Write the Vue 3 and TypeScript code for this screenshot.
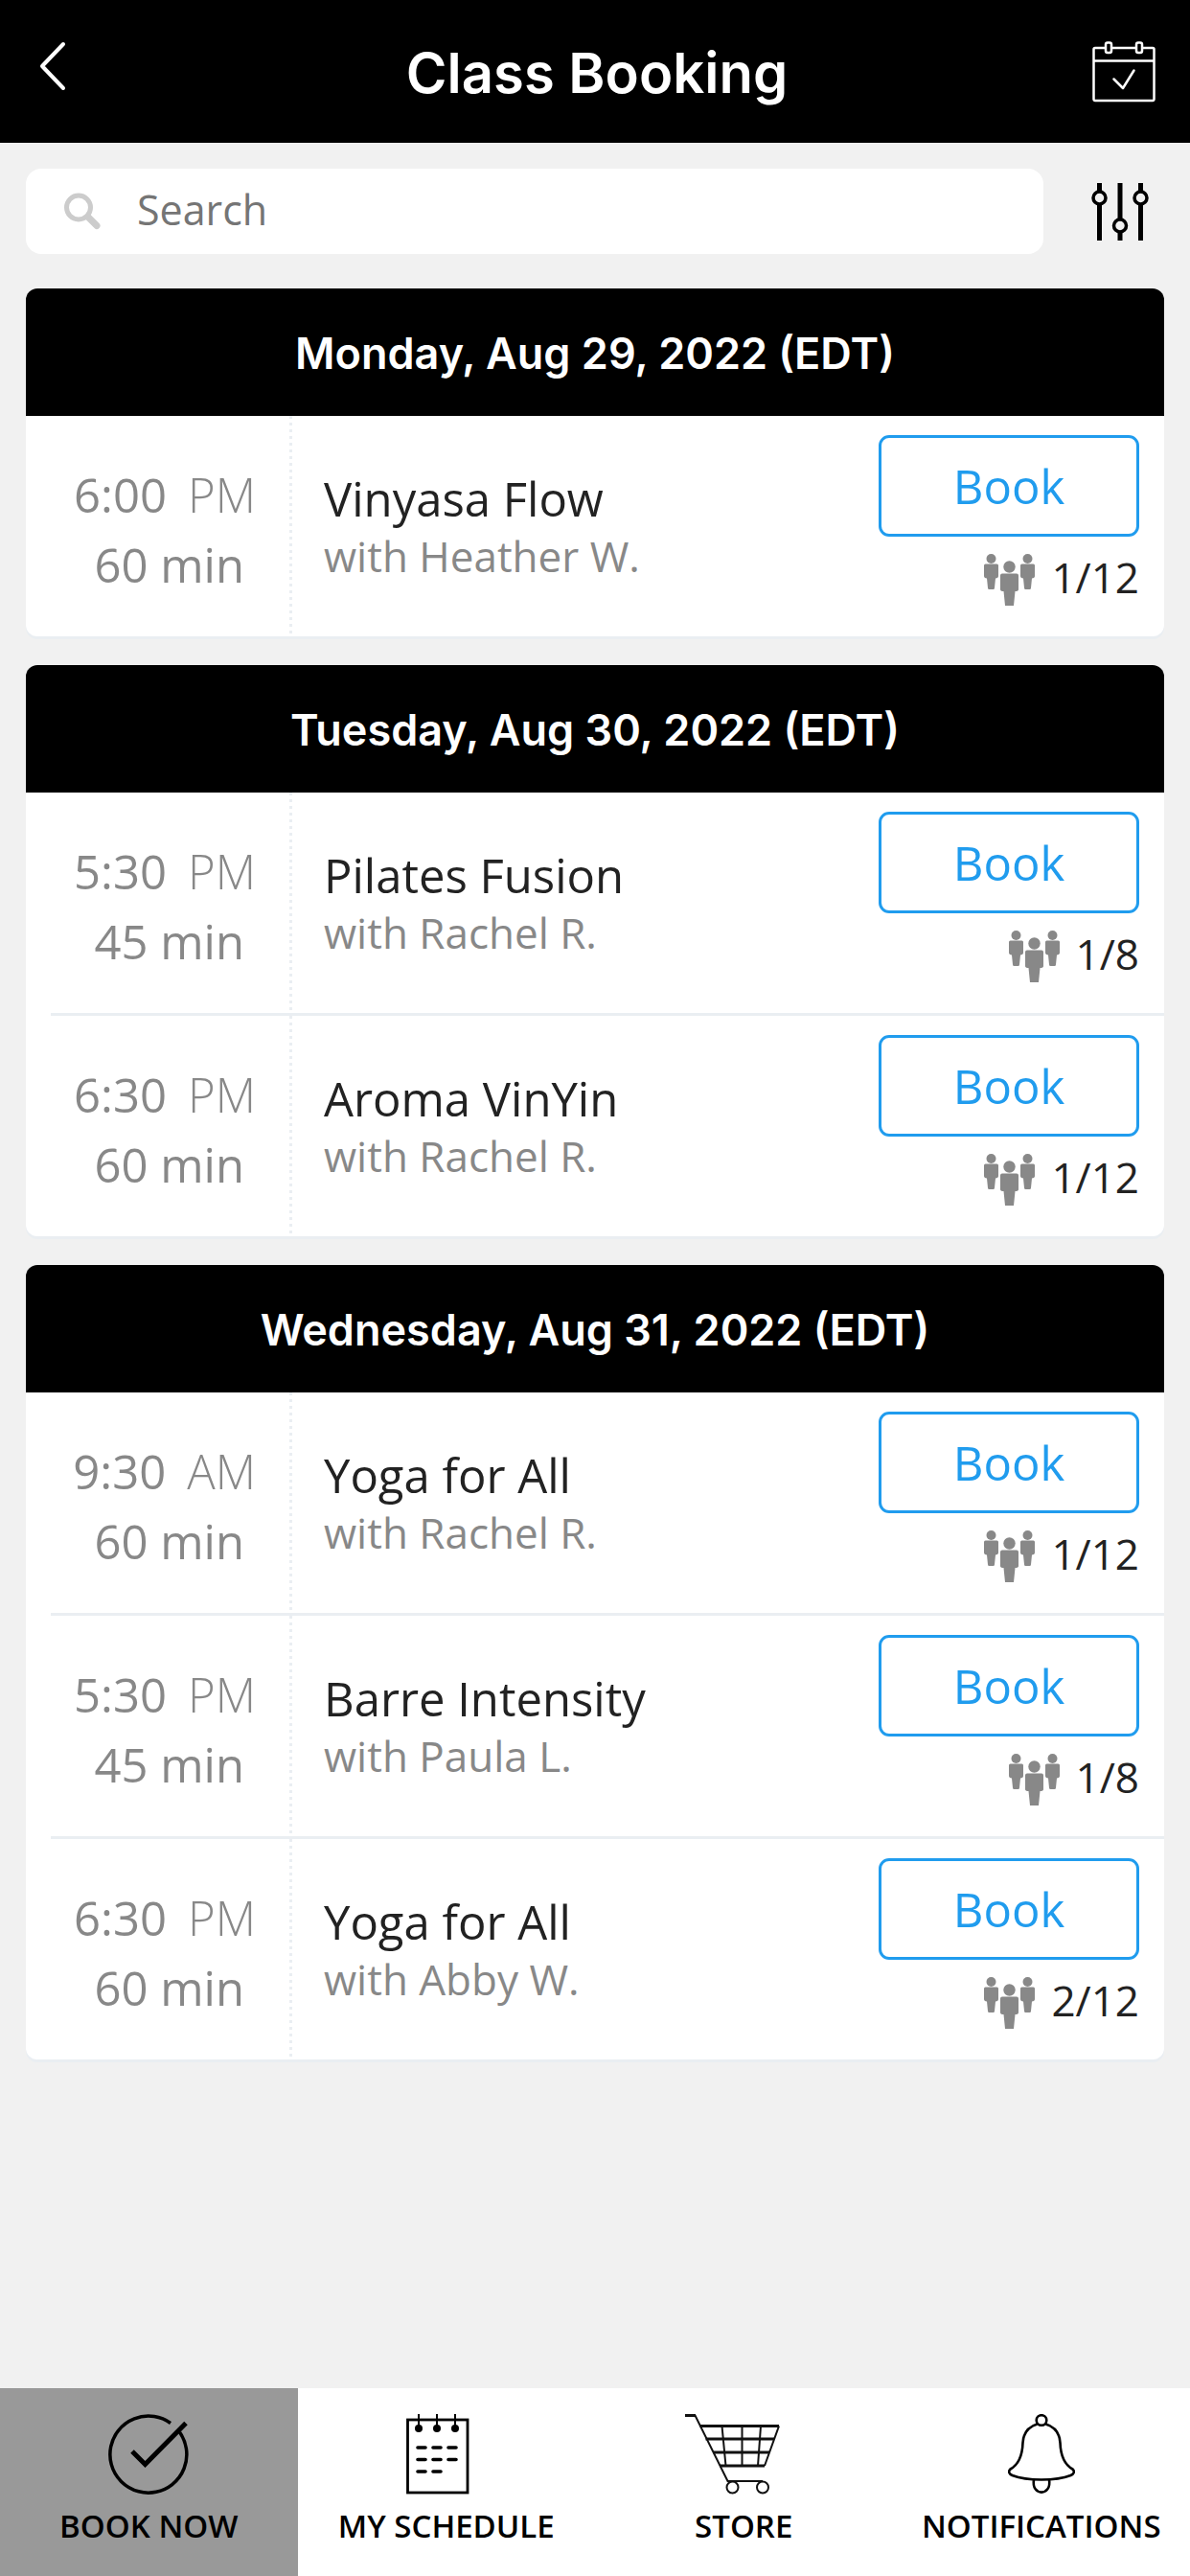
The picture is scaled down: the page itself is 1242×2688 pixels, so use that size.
<script setup lang="ts">
import { ref, computed } from 'vue'

interface ClassSlot {
  time: string
  period: 'AM' | 'PM'
  minutes: number
  title: string
  teacher: string
  booked: number
  capacity: number
}

interface Day {
  label: string
  slots: ClassSlot[]
}

const days: Day[] = [
  {
    label: 'Monday, Aug 29, 2022 (EDT)',
    slots: [
      { time: '6:00', period: 'PM', minutes: 60, title: 'Vinyasa Flow', teacher: 'Heather W.', booked: 1, capacity: 12 },
    ],
  },
  {
    label: 'Tuesday, Aug 30, 2022 (EDT)',
    slots: [
      { time: '5:30', period: 'PM', minutes: 45, title: 'Pilates Fusion', teacher: 'Rachel R.', booked: 1, capacity: 8 },
      { time: '6:30', period: 'PM', minutes: 60, title: 'Aroma VinYin', teacher: 'Rachel R.', booked: 1, capacity: 12 },
    ],
  },
  {
    label: 'Wednesday, Aug 31, 2022 (EDT)',
    slots: [
      { time: '9:30', period: 'AM', minutes: 60, title: 'Yoga for All', teacher: 'Rachel R.', booked: 1, capacity: 12 },
      { time: '5:30', period: 'PM', minutes: 45, title: 'Barre Intensity', teacher: 'Paula L.', booked: 1, capacity: 8 },
      { time: '6:30', period: 'PM', minutes: 60, title: 'Yoga for All', teacher: 'Abby W.', booked: 2, capacity: 12 },
    ],
  },
]

const query = ref('')

const visibleDays = computed<Day[]>(() => {
  const q = query.value.trim().toLowerCase()
  if (!q) return days
  return days
    .map((d) => ({ ...d, slots: d.slots.filter((s) => `${s.title} ${s.teacher}`.toLowerCase().includes(q)) }))
    .filter((d) => d.slots.length > 0)
})
</script>

<template>
  <div class="page">
    <header class="topbar">
      <button class="icon-button back" type="button" aria-label="Back">
        <svg width="30" height="64" viewBox="0 0 30 64" fill="none" stroke="#fff" stroke-width="4" stroke-linecap="round" stroke-linejoin="round">
          <path d="M26 3 4 26l22 23" />
        </svg>
      </button>
      <h1>Class Booking</h1>
      <button class="icon-button calendar" type="button" aria-label="My calendar">
        <svg width="66" height="64" viewBox="0 0 66 64" fill="none" stroke="#fff" stroke-width="2.5" stroke-linejoin="round" stroke-linecap="round">
          <path d="M13.500 7H3a1.500 1.500 0 0 0-1.500 1.500v52A1.500 1.500 0 0 0 3 62h60a1.500 1.500 0 0 0 1.500-1.500v-52A1.500 1.500 0 0 0 63 7h-10.500M20.500 7h25M2 20.500h62M22.500 39.500 32 49 43.500 30.500" />
          <rect x="14" y="1.500" width="6" height="10.500" rx="2" />
          <rect x="46" y="1.500" width="6" height="10.500" rx="2" />
        </svg>
      </button>
    </header>

    <form class="search-row" role="search" @submit.prevent>
      <label class="search-box">
        <svg width="40" height="40" viewBox="0 0 40 40" fill="none" stroke="#ccc" aria-hidden="true">
          <circle cx="15" cy="15.500" r="12.500" stroke-width="5" />
          <path d="M25 25.500 34 34.500" stroke-width="7" stroke-linecap="round" />
        </svg>
        <input v-model="query" type="text" placeholder="Search" aria-label="Search" />
      </label>
      <button class="icon-button filter" type="button" aria-label="Filters">
        <svg width="60" height="60" viewBox="0 0 60 60" fill="none" stroke="#000">
          <path d="M8.500 0v8M8.500 23v37M30 0v37M30 52v8M51.500 0v8M51.500 23v37" stroke-width="5" />
          <circle cx="8.500" cy="15.500" r="6.500" stroke-width="3.500" />
          <circle cx="30" cy="44.500" r="6.500" stroke-width="3.500" />
          <circle cx="51.500" cy="15.500" r="6.500" stroke-width="3.500" />
        </svg>
      </button>
    </form>

    <main class="days">
      <section v-for="day in visibleDays" :key="day.label" class="day">
        <h2>{{ day.label }}</h2>
        <ul>
          <li v-for="slot in day.slots" :key="slot.time + slot.period" class="slot">
            <div class="when">
              <p>{{ slot.time }}<span class="period">{{ slot.period }}</span></p>
              <p class="duration">{{ slot.minutes }} min</p>
            </div>
            <div class="what">
              <h3>{{ slot.title }}</h3>
              <p>with {{ slot.teacher }}</p>
            </div>
            <div class="action">
              <button class="book" type="button">Book</button>
              <p class="spots">
                <svg width="53" height="54" viewBox="0 0 53 54" fill="#888" aria-hidden="true">
                  <circle cx="7.500" cy="5" r="5" />
                  <path d="M1.500 10.500h12q1.500 0 1.500 1.500v11q0 2-3 2.500l-1 10q0 1.500-1.500 1.500h-4q-1.500 0-1.500-1.500l-1-10q-3-.5-3-2.500V12q0-1.500 1.500-1.500z" />
                  <circle cx="45.500" cy="5" r="5" />
                  <path d="M39.500 10.500h12q1.500 0 1.500 1.500v11q0 2-3 2.500l-1 10q0 1.500-1.500 1.500h-4q-1.500 0-1.500-1.500l-1-10q-3-.5-3-2.500V12q0-1.500 1.500-1.500z" />
                  <circle cx="26.500" cy="13.500" r="6.200" />
                  <path d="M19 20.500h15q2 0 2 2V37q0 2-3.500 2L31 54h-9l-1.500-15Q17 39 17 37V22.500q0-2 2-2z" />
                </svg>
                <span>{{ slot.booked }}/{{ slot.capacity }}</span>
              </p>
            </div>
          </li>
        </ul>
      </section>
    </main>

    <nav class="tabs" aria-label="Main">
      <a href="#book" class="active" aria-current="page">
        <svg width="84" height="84" viewBox="0 0 84 84" fill="none" stroke="#000">
          <path d="M65 9.500A40 40 0 1 0 74.500 19" stroke-width="3.500" />
          <path d="M25 39 38.500 52.500 81 9.500" stroke-width="5" />
        </svg>
        <span>BOOK NOW</span>
      </a>
      <a href="#schedule">
        <svg width="84" height="84" viewBox="0 0 84 84" fill="none" stroke="#000">
          <rect x="1.500" y="6" width="62.500" height="76" stroke-width="2.800" />
          <path d="M13 0v14M32 0v14M51 0v14" stroke-width="2" />
          <g fill="#000" stroke="none">
            <circle cx="13" cy="15" r="4" />
            <circle cx="32" cy="15" r="4" />
            <circle cx="51" cy="15" r="4" />
          </g>
          <path d="M12 35h8M28 35h8M44 35h8M12 47.500h8M28 47.500h8M44 47.500h8M12 60h8M28 60h8" stroke-width="3.600" stroke-linecap="round" />
        </svg>
        <span>MY SCHEDULE</span>
      </a>
      <a href="#store">
        <svg width="122" height="84" viewBox="0 0 122 84" fill="none" stroke="#111">
          <path d="M0 1.500h11M15.500 12.500H98M21.500 26H93M29.500 40H88M36.500 54H83" stroke-width="2.800" />
          <path d="M10.500 1.500 44.500 70H81M98 12.500 83 54M38.500 12.500l4 41.500M59.500 12.500V54M79 12.500 76 54" stroke-width="2" />
          <circle cx="49.500" cy="76.500" r="6" stroke-width="2" />
          <circle cx="81" cy="76.500" r="6" stroke-width="2" />
        </svg>
        <span>STORE</span>
      </a>
      <a href="#notifications">
        <svg width="70" height="84" viewBox="0 0 70 84" fill="none" stroke="#000" stroke-width="2.600">
          <circle cx="35" cy="6.500" r="5.300" />
          <path d="M30.500 10.500C21 13.500 16 20 15.500 30 15 45 10.500 53 2.500 57.500 0 60 1 62.500 4.500 64 20 70 50 70 65.500 64 69 62.500 70 60 67.500 57.500 59.500 53 55 45 54.500 30 54 20 49 13.500 39.500 10.500" />
          <path d="M27 68.500C24 86 46 86 43 68.500" />
        </svg>
        <span>NOTIFICATIONS</span>
      </a>
    </nav>
  </div>
</template>

<style>
body {
  background: #f1f1f1;
}
</style>

<style scoped>
.page {
  display: flex;
  flex-direction: column;
  min-height: 100vh;
  background: #f1f1f1;
  color: #222;
  font-family: "Open Sans", "Noto Sans", sans-serif;
}

.page *,
.page {
  box-sizing: border-box;
}

h1,
h2,
h3,
p,
ul {
  margin: 0;
  padding: 0;
  font-weight: 400;
  list-style: none;
}

button {
  margin: 0;
  padding: 0;
  border: 0;
  background: none;
  font: inherit;
  cursor: pointer;
}

svg {
  display: block;
  flex: none;
}

.topbar {
  display: grid;
  grid-template-columns: 1fr auto 1fr;
  align-items: center;
  height: 149px;
  padding: 0 36px 0 40px;
  background: #000;
  color: #fff;
}

.topbar h1 {
  padding-top: 2px;
  font: 600 58px/80px Inter, sans-serif;
}

.back {
  justify-self: start;
}

.calendar {
  justify-self: end;
}

.search-row {
  display: flex;
  gap: 33px;
  padding: 27px 27px 36px;
}

.search-box {
  flex: 1;
  display: flex;
  align-items: center;
  gap: 36px;
  min-width: 0;
  height: 89px;
  padding: 0 40px;
  border-radius: 16px;
  background: #fff;
}

.search-box input {
  flex: 1;
  min-width: 0;
  height: 60px;
  padding: 0 0 4px;
  border: 0;
  outline: 0;
  background: none;
  color: #222;
  font: 400 43px/56px "Open Sans", "Noto Sans", sans-serif;
}

.search-box input::placeholder {
  color: #757575;
  opacity: 1;
}

.filter {
  display: flex;
  align-items: center;
  justify-content: center;
  width: 93px;
}

.days {
  display: flex;
  flex-direction: column;
  gap: 30px;
  padding: 0 27px 30px;
}

.day {
  overflow: hidden;
  border-radius: 12px;
  background: #fff;
  box-shadow: 0 3px 0 #eaeef2;
}

.day h2 {
  padding-top: 2px;
  background: #000;
  color: #fff;
  font: 600 45px/131px Inter, sans-serif;
  text-align: center;
}

.slot {
  position: relative;
  display: flex;
  height: 233px;
  padding: 0 26px 3px 0;
}

.slot::after {
  content: "";
  position: absolute;
  right: 0;
  bottom: 0;
  left: 26px;
  height: 3px;
  background: #eaeef2;
}

.slot:last-child {
  height: 230px;
  padding-bottom: 0;
}

.slot:last-child::after {
  display: none;
}

.when {
  width: 278px;
  padding: 46px 38px 0 0;
  background: repeating-linear-gradient(#eaeef2 0 3px, #fff 3px 7px) right / 3px 100% no-repeat;
  color: #888;
  font-size: 49px;
  line-height: 73px;
  text-align: right;
  white-space: nowrap;
}

.period {
  margin-left: 22px;
  font-weight: 300;
}

.duration {
  padding-right: 12px;
}

.what {
  flex: 1;
  min-width: 0;
  padding: 56px 20px 0 33px;
  line-height: 60px;
}

.what h3 {
  font-size: 49px;
}

.what p {
  color: #888;
  font-size: 44px;
}

.action {
  display: flex;
  flex-direction: column;
  gap: 12px;
  width: 272px;
  padding-top: 20px;
}

.book {
  height: 106px;
  border: 3px solid #209cee;
  border-radius: 11px;
  color: #209cee;
  font-size: 49px;
}

.spots {
  display: flex;
  align-items: flex-end;
  justify-content: flex-end;
  gap: 17px;
  font-size: 44px;
  line-height: 60px;
}

.tabs {
  position: sticky;
  bottom: 0;
  display: grid;
  grid-template-columns: repeat(4, 1fr);
  margin-top: auto;
  background: #fff;
}

.tabs a {
  display: flex;
  flex-direction: column;
  align-items: center;
  gap: 11px;
  padding: 27px 0 30px;
  color: #000;
  font-size: 33px;
  font-weight: 600;
  line-height: 44px;
  text-decoration: none;
  white-space: nowrap;
}

.tabs a.active {
  background: #999;
}
</style>
